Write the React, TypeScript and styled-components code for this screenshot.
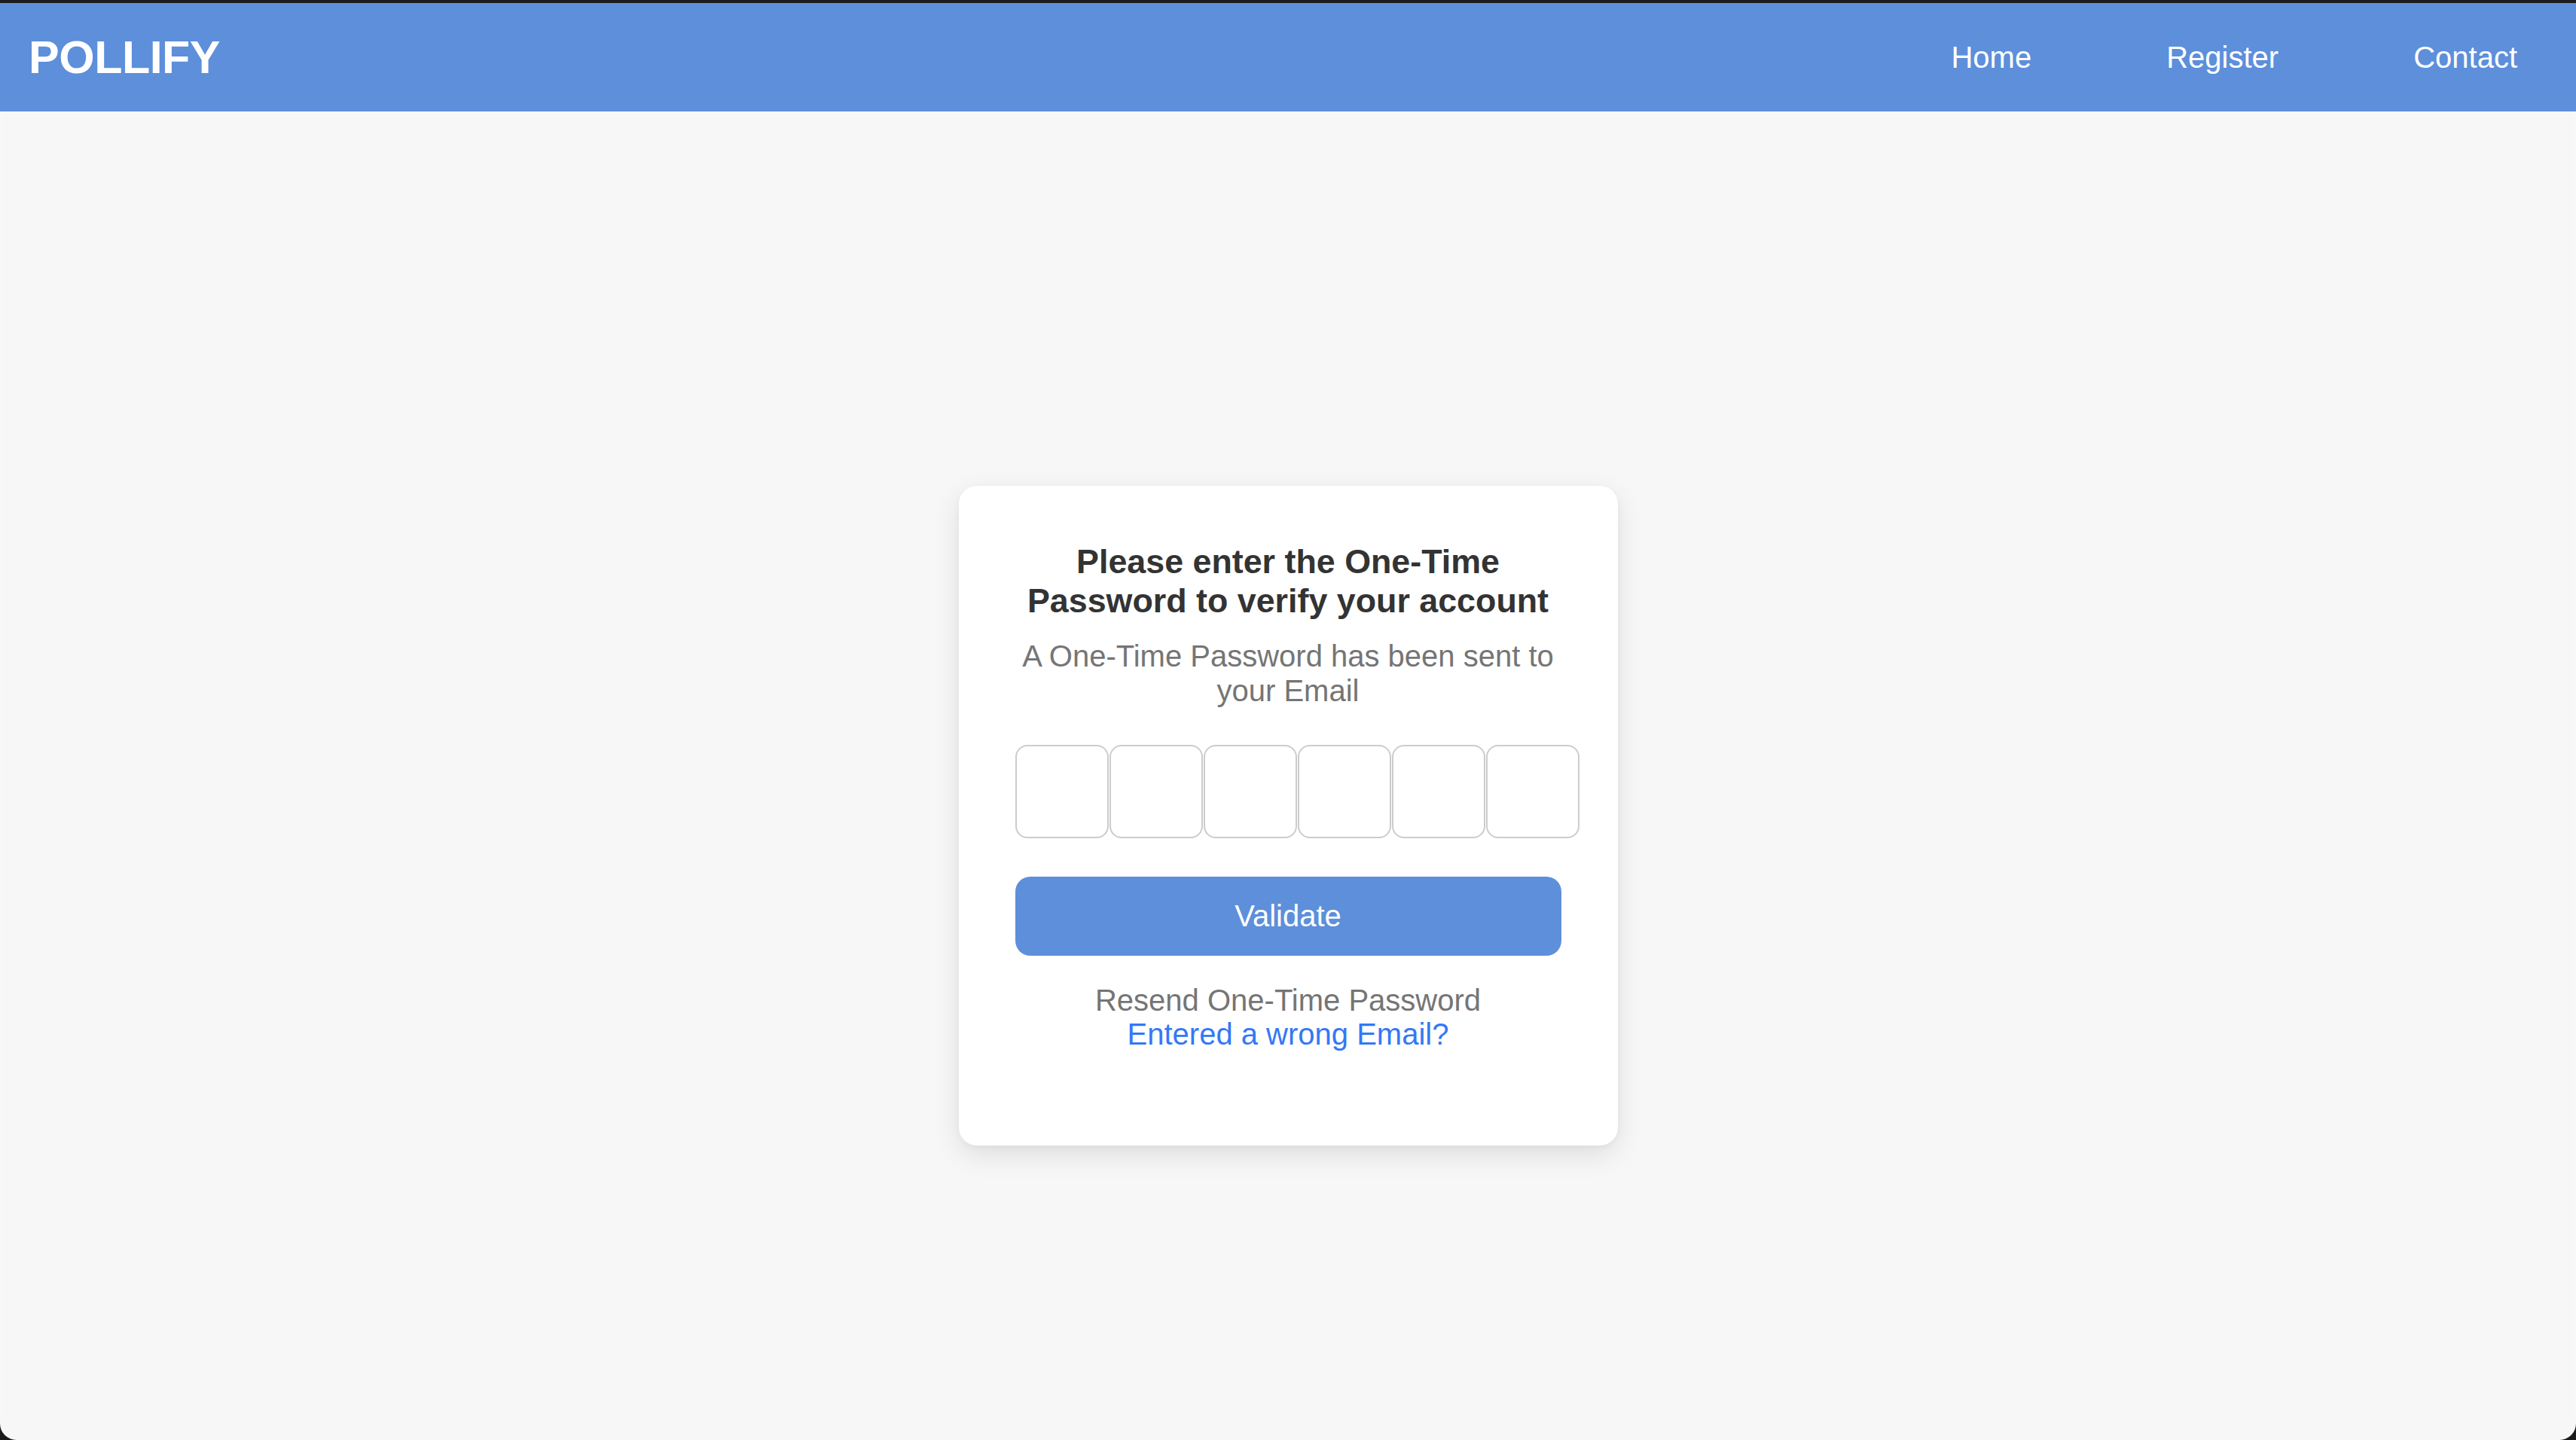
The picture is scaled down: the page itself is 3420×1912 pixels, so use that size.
import React from "react";
import styled, { createGlobalStyle } from "styled-components";

const GlobalStyle = createGlobalStyle`
  html, body {
    margin: 0;
    padding: 0;
    background: #1b1b1d;
  }
  * { box-sizing: border-box; }
  #root { min-height: 100vh; }
`;

const Window = styled.div`
  margin-top: 4px;
  height: 1908px;
  background: #f7f7f7;
  border-radius: 0 0 22px 22px;
  overflow: hidden;
  display: flex;
  flex-direction: column;
  font-family: "Liberation Sans", Arial, Helvetica, sans-serif;
  box-shadow: inset 2px 0 0 rgba(255, 255, 255, 0.12), inset -3px 0 0 rgba(255, 255, 255, 0.12);
`;

const Header = styled.header`
  height: 144px;
  flex: 0 0 auto;
  background: #5d8fdb;
  display: flex;
  align-items: center;
  justify-content: space-between;
  padding: 0 78px 0 38px;
`;

const Logo = styled.div`
  color: #ffffff;
  font-weight: 700;
  font-size: 61px;
  letter-spacing: -0.5px;
  line-height: 1;
`;

const Nav = styled.nav`
  display: flex;
  align-items: center;
  gap: 179px;
`;

const NavLink = styled.a`
  color: #ffffff;
  font-size: 40px;
  text-decoration: none;
  line-height: 1;
  cursor: pointer;
`;

const Main = styled.main`
  flex: 1 1 auto;
  display: flex;
  justify-content: center;
  align-items: flex-start;
  padding-top: 497px;
`;

const Card = styled.section`
  width: 875px;
  background: #ffffff;
  border-radius: 24px;
  padding: 75px 75px 125px;
  box-shadow: 0 12px 36px rgba(0, 0, 0, 0.1), 0 2px 8px rgba(0, 0, 0, 0.04);
  display: flex;
  flex-direction: column;
  text-align: center;
`;

const Title = styled.h2`
  margin: 0 0 25px;
  font-size: 44.8px;
  line-height: 51.5px;
  font-weight: 700;
  color: #333333;
`;

const Subtitle = styled.p`
  margin: 0 0 49px;
  font-size: 40px;
  line-height: 46px;
  color: #757575;
`;

const OtpRow = styled.div`
  display: flex;
  gap: 1.2px;
  width: 725px;
  margin-bottom: 51px;
`;

const OtpBox = styled.input`
  flex: 0 0 124px;
  width: 124px;
  height: 124px;
  border: 2px solid #cccccc;
  border-radius: 16px;
  background: #ffffff;
  font-family: inherit;
  font-size: 48px;
  text-align: center;
  outline: none;
  padding: 0;
`;

const ValidateButton = styled.button`
  width: 100%;
  height: 105px;
  border: none;
  border-radius: 20px;
  background: #5d8fdb;
  color: #ffffff;
  font-family: inherit;
  font-size: 40px;
  cursor: pointer;
  margin-bottom: 37px;
`;

const FooterLine = styled.div<{ $link?: boolean }>`
  font-size: 40px;
  line-height: 45px;
  color: ${(p) => (p.$link ? "#3478f6" : "#757575")};
  cursor: ${(p) => (p.$link ? "pointer" : "default")};
`;

export default function App() {
  const digits = [0, 1, 2, 3, 4, 5];
  return (
    <>
      <GlobalStyle />
      <Window>
        <Header>
          <Logo>POLLIFY</Logo>
          <Nav>
            <NavLink>Home</NavLink>
            <NavLink>Register</NavLink>
            <NavLink>Contact</NavLink>
          </Nav>
        </Header>
        <Main>
          <Card>
            <Title>Please enter the One-Time Password to verify your account</Title>
            <Subtitle>A One-Time Password has been sent to your Email</Subtitle>
            <OtpRow>
              {digits.map((d) => (
                <OtpBox key={d} type="text" maxLength={1} aria-label={`Digit ${d + 1}`} />
              ))}
            </OtpRow>
            <ValidateButton>Validate</ValidateButton>
            <FooterLine>Resend One-Time Password</FooterLine>
            <FooterLine $link>Entered a wrong Email?</FooterLine>
          </Card>
        </Main>
      </Window>
    </>
  );
}
